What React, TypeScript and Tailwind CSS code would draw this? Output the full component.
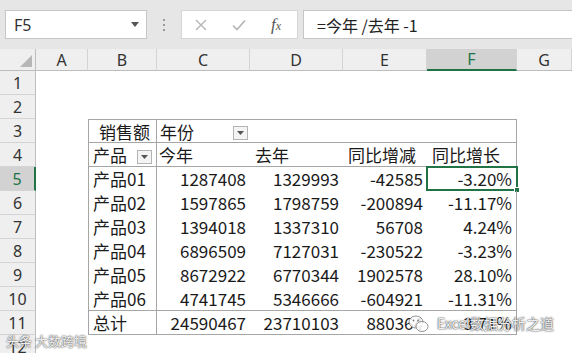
import React from "react";

const cols = ["A", "B", "C", "D", "E", "F", "G"];

type Row = { b: string; c: string; d: string; e: string; f: string };
const data: Row[] = [
  { b: "产品01", c: "1287408", d: "1329993", e: "-42585", f: "-3.20%" },
  { b: "产品02", c: "1597865", d: "1798759", e: "-200894", f: "-11.17%" },
  { b: "产品03", c: "1394018", d: "1337310", e: "56708", f: "4.24%" },
  { b: "产品04", c: "6896509", d: "7127031", e: "-230522", f: "-3.23%" },
  { b: "产品05", c: "8672922", d: "6770344", e: "1902578", f: "28.10%" },
  { b: "产品06", c: "4741745", d: "5346666", e: "-604921", f: "-11.31%" },
];

function DropBtn({ cls }: { cls: string }) {
  return (
    <div
      className={
        "absolute bottom-[2px] w-[15px] h-[14px] border border-[#b4b4b4] bg-[#f4f4f4] flex items-center justify-center " +
        cls
      }
    >
      <svg width="7" height="4" viewBox="0 0 7 4">
        <path d="M0 0 L7 0 L3.5 4 Z" fill="#555" />
      </svg>
    </div>
  );
}

function RowHead({ n, sel }: { n: number; sel?: boolean }) {
  return (
    <div
      className={
        "flex items-center justify-center border-b border-[#d4d4d4] text-[16px] " +
        (sel
          ? "bg-[#d2d2d2] border-r-2 border-r-[#217346] text-[#217346]"
          : "bg-[#efefef] border-r border-r-[#bdbdbd] text-[#333]")
      }
    >
      {n}
    </div>
  );
}

const B = "border-[#a6a6a6]";

export default function App() {
  const pv = "font-['Noto_Sans_CJK_SC',sans-serif] text-[17px] text-[#1a1a1a] leading-[24px] whitespace-nowrap";
  const bCell = `${pv} relative border-l border-r ${B} pl-[4px]`;
  const fCell = `${pv} relative border-r ${B} text-right pr-[4px]`;
  const num = `${pv} text-right pr-[4px]`;

  return (
    <div className="w-[572px] h-[353px] overflow-hidden relative bg-white font-['Noto_Sans',sans-serif]">
      {/* toolbar */}
      <div className="h-[49px] bg-[#e6e6e6] flex items-start pt-[10px]">
        <div className="ml-[5px] w-[142px] h-[29px] bg-white border border-[#c6c6c6] flex items-center justify-between pl-[8px] pr-[7px]">
          <span className="text-[16px] text-[#333]">F5</span>
          <svg width="8" height="5" viewBox="0 0 8 5">
            <path d="M0 0 L8 0 L4 5 Z" fill="#555" />
          </svg>
        </div>
        <div className="w-[34px] h-[29px] flex flex-col items-center justify-center gap-[3px]">
          <div className="w-[2px] h-[2px] bg-[#9a9a9a]" />
          <div className="w-[2px] h-[2px] bg-[#9a9a9a]" />
          <div className="w-[2px] h-[2px] bg-[#9a9a9a]" />
        </div>
        <div className="w-[117px] h-[29px] bg-white border border-[#d6d6d6] flex items-center">
          <svg className="ml-[13px]" width="12" height="12" viewBox="0 0 12 12">
            <path d="M1 1 L11 11 M11 1 L1 11" stroke="#b5b5b5" strokeWidth="1.4" />
          </svg>
          <svg className="ml-[25px]" width="14" height="12" viewBox="0 0 14 12">
            <path d="M1 6.5 L5 10.5 L13 1.5" stroke="#b5b5b5" strokeWidth="1.6" fill="none" />
          </svg>
          <span className="ml-[25px] font-['Liberation_Serif',serif] italic text-[17px] text-[#555] leading-none">
            f<span className="text-[12px]">x</span>
          </span>
        </div>
        <div className="ml-[5px] flex-1 h-[29px] bg-white border border-[#c6c6c6] border-r-0 flex items-center pl-[13px]">
          <span className="font-['Noto_Sans_CJK_SC',sans-serif] text-[16px] text-[#222]">=今年 /去年 -1</span>
        </div>
      </div>

      {/* sheet */}
      <div className="grid grid-cols-[36px_52px_69px_93px_93px_84px_90px_1fr] grid-rows-[22px_repeat(12,24px)]">
        {/* header row */}
        <div className="relative bg-[#efefef] border-r border-b border-[#bdbdbd]">
          <svg className="absolute right-[3px] bottom-[3px]" width="12" height="12" viewBox="0 0 12 12">
            <path d="M12 0 L12 12 L0 12 Z" fill="#b7b7b7" />
          </svg>
        </div>
        {cols.map((c) => (
          <div
            key={c}
            className={
              "flex items-center justify-center text-[16px] border-r border-r-[#d4d4d4] " +
              (c === "F"
                ? "bg-[#d2d2d2] text-[#217346] border-b-2 border-b-[#217346]"
                : "bg-[#efefef] text-[#333] border-b border-b-[#bdbdbd]")
            }
          >
            {c}
          </div>
        ))}

        {/* rows 1-2 */}
        <RowHead n={1} />
        <div className="col-span-7" />
        <RowHead n={2} />
        <div className="col-span-7" />

        {/* row 3 */}
        <RowHead n={3} />
        <div />
        <div className={`${bCell} border-t border-b text-center pl-0`}>销售额</div>
        <div className={`${pv} relative border-t border-b ${B} pl-[3px]`}>
          年份
          <DropBtn cls="right-[2px]" />
        </div>
        <div className={`border-t border-b ${B}`} />
        <div className={`border-t border-b ${B}`} />
        <div className={`border-t border-b border-r ${B}`} />
        <div />

        {/* row 4 */}
        <RowHead n={4} />
        <div />
        <div className={`${bCell} border-b`}>
          产品
          <DropBtn cls="right-[4px]" />
        </div>
        <div className={`${pv} border-b ${B} pl-[2px]`}>今年</div>
        <div className={`${pv} border-b ${B} pl-[5px]`}>去年</div>
        <div className={`${pv} border-b ${B} pl-[5px]`}>同比增减</div>
        <div className={`${pv} border-b border-r ${B} pl-[5px]`}>同比增长</div>
        <div />

        {data.map((r, i) => {
          const last = i === data.length - 1;
          const bb = last ? `border-b ${B}` : "";
          return (
            <React.Fragment key={r.b}>
              <RowHead n={5 + i} sel={i === 0} />
              <div />
              <div className={`${bCell} ${bb}`}>{r.b}</div>
              <div className={`${num} ${bb}`}>{r.c}</div>
              <div className={`${num} ${bb}`}>{r.d}</div>
              <div className={`${num} ${bb}`}>{r.e}</div>
              <div className={`${fCell} ${bb}`}>
                {r.f}
                {i === 0 && (
                  <div className="absolute -left-[1px] -top-[1px] w-[92px] h-[25px] border-2 border-[#217346]">
                    <div className="absolute -right-[4px] -bottom-[4px] w-[6px] h-[6px] bg-[#217346] border border-white" />
                  </div>
                )}
              </div>
              <div />
            </React.Fragment>
          );
        })}

        {/* row 11 */}
        <RowHead n={11} />
        <div />
        <div className={`${bCell} border-b`}>总计</div>
        <div className={`${num} border-b ${B}`}>24590467</div>
        <div className={`${num} border-b ${B}`}>23710103</div>
        <div className={`${num} border-b ${B}`}>880364</div>
        <div className={`${fCell} border-b`}>3.71%</div>
        <div />

        {/* row 12 */}
        <RowHead n={12} />
        <div className="col-span-7" />
      </div>

      {/* watermarks */}
      <div className="absolute left-[6px] top-[333px] leading-[16px] font-['Noto_Sans_CJK_SC',sans-serif] text-[13px] text-white/90 [text-shadow:0_0_2px_#555,0_0_1px_#555]">
        头条 大数跨境
      </div>
      <div className="absolute left-[408px] top-[313px] flex items-center gap-[7px]">
        <svg width="22" height="20" viewBox="0 0 22 20">
          <ellipse cx="8" cy="8" rx="7" ry="6" fill="#fff" fillOpacity="0.85" stroke="#777" strokeWidth="0.8" />
          <ellipse cx="14" cy="12.5" rx="6" ry="5" fill="#fff" fillOpacity="0.85" stroke="#777" strokeWidth="0.8" />
          <circle cx="5.5" cy="6.5" r="0.9" fill="#777" />
          <circle cx="10" cy="6.5" r="0.9" fill="#777" />
        </svg>
        <span className="font-['Noto_Sans_CJK_SC',sans-serif] text-[14px] text-white/90 [text-shadow:0_0_2px_#444,0_0_1px_#444]">
          Excel数据分析之道
        </span>
      </div>
    </div>
  );
}
